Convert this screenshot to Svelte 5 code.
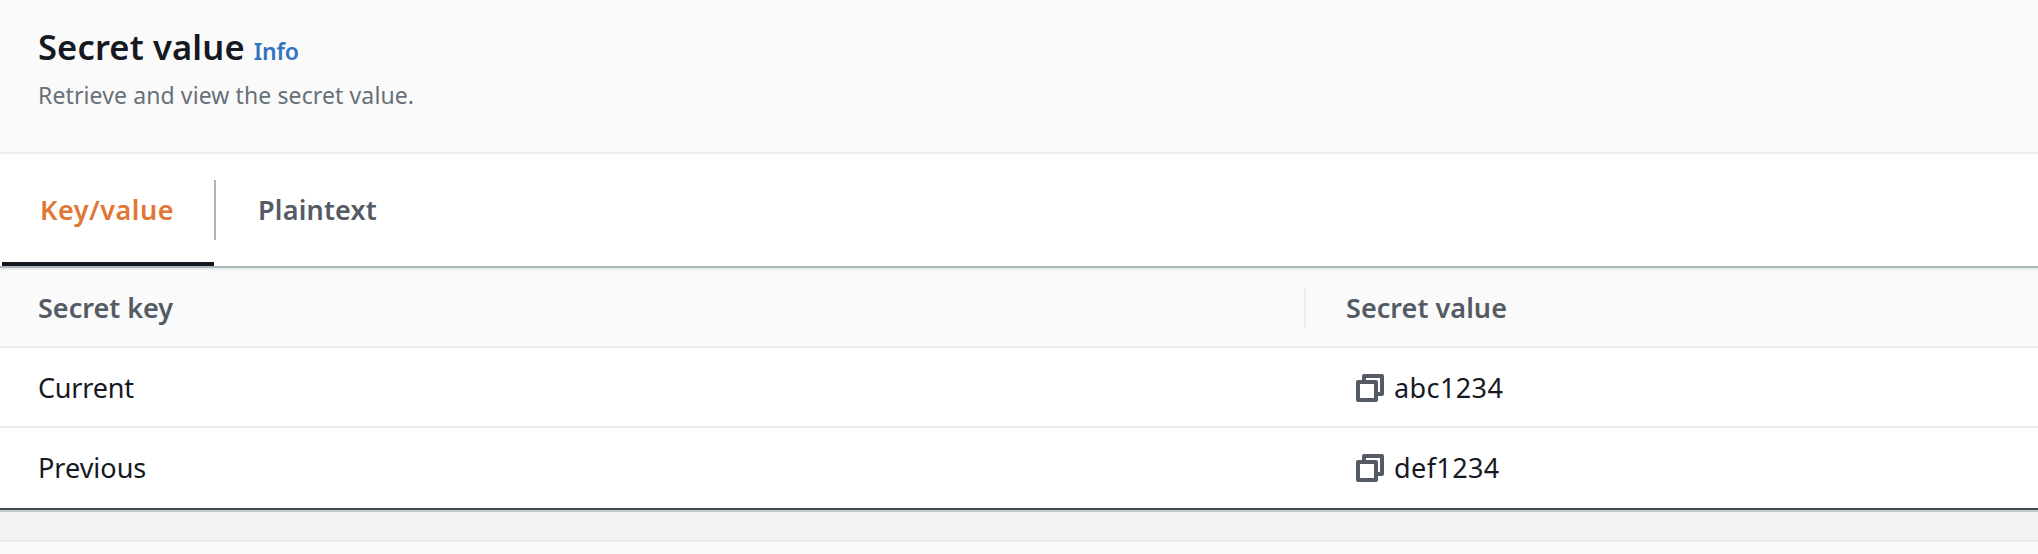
<script>
  const tabs = [
    { label: 'Key/value', active: true },
    { label: 'Plaintext', active: false }
  ];
  const rows = [
    { key: 'Current', value: 'abc1234' },
    { key: 'Previous', value: 'def1234' }
  ];
</script>

<section class="panel">
  <header>
    <div class="heading"><h2>Secret value</h2><span class="info">Info</span></div>
    <p>Retrieve and view the secret value.</p>
  </header>
  <nav>
    {#each tabs as tab}
      <div class="tab" class:active={tab.active}><span>{tab.label}</span></div>
    {/each}
  </nav>
  <div class="row head">
    <div class="key">Secret key</div>
    <div class="value">Secret value</div>
  </div>
  {#each rows as row}
    <div class="row item">
      <div class="key" class:tight={row.key === 'Current'}>{row.key}</div>
      <div class="value">
        <svg width="28" height="28" viewBox="0 0 28 28" fill="none" stroke="#545b64" stroke-width="4" stroke-linejoin="round">
          <path d="M8 8V2h18v18h-6" />
          <path d="M2 8h18v18H2z" />
        </svg>
        <span class="secret">{row.value}</span>
      </div>
    </div>
  {/each}
</section>
<div class="gap"></div>
<section class="next"></section>

<style>
  :global(body) {
    margin: 0;
    background: #fafafa;
    overflow: hidden;
  }
  .panel {
    font-family: 'Noto Sans', sans-serif;
    background: #fff;
    color: #16191f;
    border-bottom: 2px solid #414d55;
    box-shadow: 0 2px 0 #c6c9ca;
    position: relative;
    white-space: nowrap;
  }
  header {
    box-sizing: border-box;
    height: 154px;
    padding: 23px 38px 0;
    background: #fafafa;
    border-bottom: 2px solid #eaeded;
  }
  .heading {
    display: flex;
    align-items: baseline;
    gap: 9px;
    height: 48px;
    line-height: 48px;
  }
  h2 {
    margin: 0;
    font-size: 34.5px;
    font-weight: 600;
    letter-spacing: 0.15px;
  }
  .info {
    font-size: 23px;
    font-weight: 600;
    letter-spacing: -0.2px;
    color: #3074c0;
  }
  p {
    margin: 8px 0 0;
    font-size: 23px;
    line-height: 32px;
    letter-spacing: 0.11px;
    color: #687078;
  }
  nav {
    display: flex;
    box-sizing: border-box;
    height: 114px;
    padding-left: 2px;
    border-bottom: 2px solid #aab7b8;
  }
  .tab {
    box-sizing: border-box;
    height: 112px;
    padding: 26px 0 22px;
    font-size: 27px;
    font-weight: 600;
    letter-spacing: 0.2px;
    color: #545b64;
  }
  .tab span {
    display: block;
    height: 60px;
    line-height: 60px;
    padding-left: 42px;
  }
  .active {
    width: 214px;
    letter-spacing: 0.5px;
    color: #e07734;
    background: linear-gradient(#16191f, #16191f) 0 100% / 212px 4px no-repeat;
  }
  .active span {
    padding-left: 38px;
    border-right: 2px solid #aab7b8;
  }
  .row {
    display: grid;
    grid-template-columns: 1306px 1fr;
    align-items: center;
    box-sizing: border-box;
    height: 80px;
    border-bottom: 2px solid #eaeded;
    font-size: 27px;
    line-height: 38px;
  }
  .item {
    padding-top: 2px;
  }
  .item:last-child {
    padding-top: 0;
    border-bottom: 0;
  }
  .key {
    padding-left: 38px;
  }
  .tight {
    letter-spacing: -0.2px;
  }
  .value {
    display: flex;
    align-items: center;
    padding-left: 50px;
  }
  .secret {
    margin-left: 10px;
    letter-spacing: 0.4px;
  }
  .head {
    background: #fafafa;
    border-top: 2px solid #eaeded;
    font-weight: 600;
    color: #545b64;
  }
  .head .key {
    border-right: 2px solid #eaeded;
  }
  .head .value {
    padding-left: 40px;
    letter-spacing: 0.05px;
  }
  .gap {
    height: 30px;
    background: #f2f3f3;
  }
  .next {
    height: 12px;
    background: #fafafa;
    border-top: 2px solid #eaeded;
  }
</style>
